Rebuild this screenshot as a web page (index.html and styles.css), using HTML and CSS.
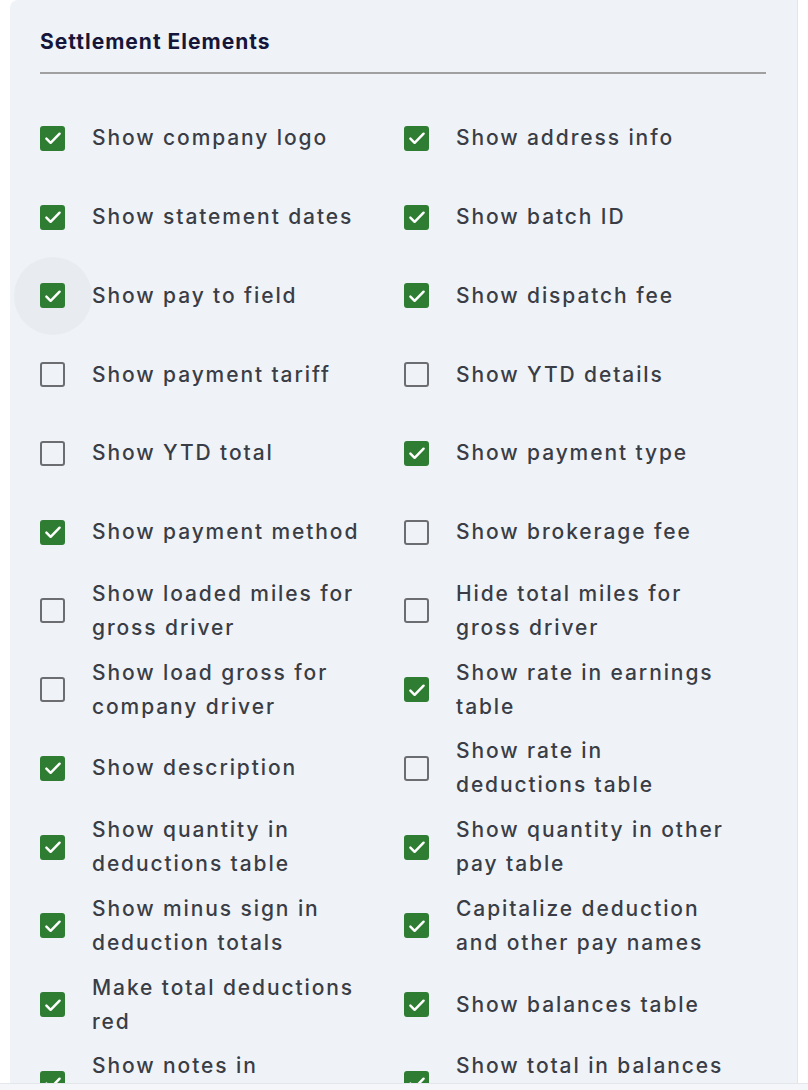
FILE: index.html
```html
<!DOCTYPE html>
<html>
<head>
<meta charset="utf-8">
<link rel="stylesheet" href="styles.css">
</head>
<body>
<div class="panel">
  <h2 class="title">Settlement Elements</h2>
  <div class="divider"></div>
  <div class="grid">
    <label class="item"><span class="box on"><svg viewBox="0 0 24 24"><path d="M4.8 12.6l4.6 4.6 9.8-9.9"/></svg></span><span class="text">Show company logo</span></label>
    <label class="item"><span class="box on"><svg viewBox="0 0 24 24"><path d="M4.8 12.6l4.6 4.6 9.8-9.9"/></svg></span><span class="text">Show address info</span></label>

    <label class="item"><span class="box on"><svg viewBox="0 0 24 24"><path d="M4.8 12.6l4.6 4.6 9.8-9.9"/></svg></span><span class="text">Show statement dates</span></label>
    <label class="item"><span class="box on"><svg viewBox="0 0 24 24"><path d="M4.8 12.6l4.6 4.6 9.8-9.9"/></svg></span><span class="text">Show batch ID</span></label>

    <label class="item"><span class="box on hover"><svg viewBox="0 0 24 24"><path d="M4.8 12.6l4.6 4.6 9.8-9.9"/></svg></span><span class="text">Show pay to field</span></label>
    <label class="item"><span class="box on"><svg viewBox="0 0 24 24"><path d="M4.8 12.6l4.6 4.6 9.8-9.9"/></svg></span><span class="text">Show dispatch fee</span></label>

    <label class="item"><span class="box"></span><span class="text">Show payment tariff</span></label>
    <label class="item"><span class="box"></span><span class="text">Show YTD details</span></label>

    <label class="item"><span class="box"></span><span class="text">Show YTD total</span></label>
    <label class="item"><span class="box on"><svg viewBox="0 0 24 24"><path d="M4.8 12.6l4.6 4.6 9.8-9.9"/></svg></span><span class="text">Show payment type</span></label>

    <label class="item"><span class="box on"><svg viewBox="0 0 24 24"><path d="M4.8 12.6l4.6 4.6 9.8-9.9"/></svg></span><span class="text">Show payment method</span></label>
    <label class="item"><span class="box"></span><span class="text">Show brokerage fee</span></label>

    <label class="item"><span class="box"></span><span class="text">Show loaded miles for gross driver</span></label>
    <label class="item"><span class="box"></span><span class="text">Hide total miles for gross driver</span></label>

    <label class="item"><span class="box"></span><span class="text">Show load gross for company driver</span></label>
    <label class="item"><span class="box on"><svg viewBox="0 0 24 24"><path d="M4.8 12.6l4.6 4.6 9.8-9.9"/></svg></span><span class="text">Show rate in earnings table</span></label>

    <label class="item"><span class="box on"><svg viewBox="0 0 24 24"><path d="M4.8 12.6l4.6 4.6 9.8-9.9"/></svg></span><span class="text">Show description</span></label>
    <label class="item"><span class="box"></span><span class="text">Show rate in deductions table</span></label>

    <label class="item"><span class="box on"><svg viewBox="0 0 24 24"><path d="M4.8 12.6l4.6 4.6 9.8-9.9"/></svg></span><span class="text">Show quantity in deductions table</span></label>
    <label class="item"><span class="box on"><svg viewBox="0 0 24 24"><path d="M4.8 12.6l4.6 4.6 9.8-9.9"/></svg></span><span class="text">Show quantity in other pay table</span></label>

    <label class="item"><span class="box on"><svg viewBox="0 0 24 24"><path d="M4.8 12.6l4.6 4.6 9.8-9.9"/></svg></span><span class="text">Show minus sign in deduction totals</span></label>
    <label class="item"><span class="box on"><svg viewBox="0 0 24 24"><path d="M4.8 12.6l4.6 4.6 9.8-9.9"/></svg></span><span class="text">Capitalize deduction and other pay names</span></label>

    <label class="item"><span class="box on"><svg viewBox="0 0 24 24"><path d="M4.8 12.6l4.6 4.6 9.8-9.9"/></svg></span><span class="text">Make total deductions red</span></label>
    <label class="item"><span class="box on"><svg viewBox="0 0 24 24"><path d="M4.8 12.6l4.6 4.6 9.8-9.9"/></svg></span><span class="text">Show balances table</span></label>

    <label class="item"><span class="box on"><svg viewBox="0 0 24 24"><path d="M4.8 12.6l4.6 4.6 9.8-9.9"/></svg></span><span class="text">Show notes in settlement</span></label>
    <label class="item"><span class="box on"><svg viewBox="0 0 24 24"><path d="M4.8 12.6l4.6 4.6 9.8-9.9"/></svg></span><span class="text">Show total in balances table</span></label>
  </div>
</div>
<div class="footer"></div>
</body>
</html>
```

FILE: styles.css
```css
html, body {
  margin: 0;
  padding: 0;
  background: #ffffff;
  height: 1090px;
  overflow: hidden;
}

body {
  font-family: Inter, "Noto Sans", "Liberation Sans", sans-serif;
  padding-left: 10px;
  padding-right: 10px;
}

.panel {
  position: relative;
  z-index: 0;
  background: #eff3f8;
  border-right: 1px solid #e2e6ea;
  border-radius: 8px 0 0 0;
  padding: 27px 31px 0 30px;
  height: 1100px;
  box-sizing: border-box;
}

.title {
  margin: 0;
  font-size: 21px;
  line-height: 29px;
  font-weight: 700;
  color: #16163a;
  letter-spacing: 1px;
}

.divider {
  margin-top: 16px;
  height: 2px;
  background: #a0a0a0;
}

.grid {
  margin-top: 25px;
  display: grid;
  grid-template-columns: 364px 1fr;
  grid-auto-rows: 78.75px;
}

.item {
  display: flex;
  align-items: center;
  gap: 27px;
}

.box {
  position: relative;
  flex: none;
  width: 25px;
  height: 25px;
  box-sizing: border-box;
  border: 2.5px solid #6b6d70;
  border-radius: 3px;
  display: flex;
  align-items: center;
  justify-content: center;
}

.box.on {
  background: #2e7d32;
  border-color: #2e7d32;
}

.box svg {
  flex: none;
  width: 22px;
  height: 22px;
  fill: none;
  stroke: #ffffff;
  stroke-width: 2.7;
  stroke-linecap: round;
  stroke-linejoin: round;
}

.box.hover::before {
  content: "";
  position: absolute;
  left: 50%;
  top: 50%;
  width: 78px;
  height: 78px;
  margin: -39px 0 0 -39px;
  border-radius: 50%;
  background: #e8ecf0;
  z-index: -1;
}

.text {
  width: 278px;
  font-size: 21px;
  line-height: 34px;
  letter-spacing: 1.9px;
  color: #3a3d45;
  font-weight: 500;
}

.footer {
  position: fixed;
  left: 0;
  right: 0;
  bottom: 0;
  height: 6px;
  background: #f4f6f9;
  border-top: 1px solid #e3e6ea;
}
```
